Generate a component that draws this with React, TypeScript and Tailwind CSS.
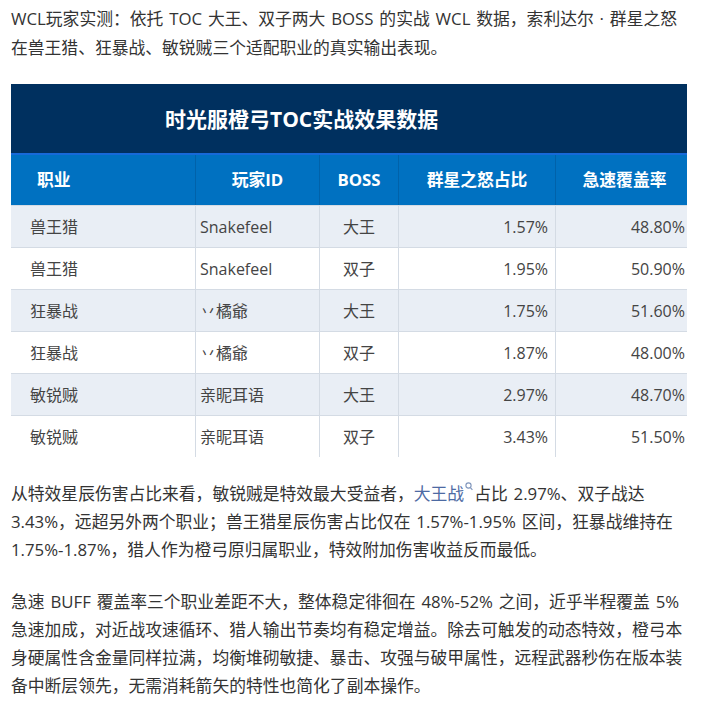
import React from "react";

const rows = [
  { job: "兽王猎", id: "Snakefeel", boss: "大王", star: "1.57%", haste: "48.80%" },
  { job: "兽王猎", id: "Snakefeel", boss: "双子", star: "1.95%", haste: "50.90%" },
  { job: "狂暴战", id: "丷橘爺", boss: "大王", star: "1.75%", haste: "51.60%" },
  { job: "狂暴战", id: "丷橘爺", boss: "双子", star: "1.87%", haste: "48.00%" },
  { job: "敏锐贼", id: "亲昵耳语", boss: "大王", star: "2.97%", haste: "48.70%" },
  { job: "敏锐贼", id: "亲昵耳语", boss: "双子", star: "3.43%", haste: "51.50%" },
];

const SearchMark: React.FC = () => (
  <svg width="8" height="9" viewBox="0 0 8 9" className="inline-block align-top mt-[2px] mx-[1px]">
    <circle cx="3.5" cy="3.5" r="2.6" fill="none" stroke="#7f95bb" strokeWidth="1.1" />
    <line x1="5.4" y1="5.6" x2="7.4" y2="7.8" stroke="#7f95bb" strokeWidth="1.2" />
  </svg>
);

const StatsTable: React.FC = () => {
  return (
    <div className="w-[676px] font-['Open_Sans','Noto_Sans_CJK_SC',sans-serif]">
      {/* title band */}
      <div className="h-[69px] bg-[#00305f] flex items-center pl-[154px]">
        <span className="text-white text-[21px] font-bold">时光服橙弓TOC实战效果数据</span>
      </div>
      <div className="h-[2px] bg-[#1769d8]" />
      {/* header */}
      <div className="grid grid-cols-[185px_124px_79px_157px_131px] h-[50px] bg-[#0071c1] text-white text-[16.8px] font-bold">
        <div className="flex items-center pl-[26px] border-r border-[#0062aa]">职业</div>
        <div className="flex items-center justify-center border-r border-[#0062aa]">玩家ID</div>
        <div className="flex items-center justify-center border-r border-[#0062aa]">BOSS</div>
        <div className="flex items-center justify-center border-r border-[#0062aa]">群星之怒占比</div>
        <div className="flex items-center justify-center pl-[6px]">急速覆盖率</div>
      </div>
      {/* body */}
      {rows.map((r, i) => (
        <div
          key={i}
          className={
            "grid grid-cols-[185px_124px_79px_157px_131px] h-[42px] border-t border-[#d4dbe4] text-[16px] text-[#444]" +
            (i % 2 === 0 ? " bg-[#e9eef5]" : " bg-white")
          }
        >
          <div className="flex items-center pl-[19px] border-r border-[#d4dbe4]">{r.job}</div>
          <div className="flex items-center pl-[4px] border-r border-[#d4dbe4]">{r.id}</div>
          <div className="flex items-center justify-center border-r border-[#d4dbe4]">{r.boss}</div>
          <div className="flex items-center justify-end pr-[7px] border-r border-[#d4dbe4]">{r.star}</div>
          <div className="flex items-center justify-end pr-[2px]">{r.haste}</div>
        </div>
      ))}
    </div>
  );
};

export default function App() {
  return (
    <div className="w-[705px] h-[718px] bg-white pl-[11px] pt-[4px] text-[16.8px] leading-[28px] text-[#333] font-['Open_Sans','Noto_Sans_CJK_SC',sans-serif] overflow-hidden">
      <p className="whitespace-nowrap leading-[29px] [word-spacing:1.5px]">
        WCL玩家实测：依托 TOC 大王、双子两大 BOSS 的实战 WCL 数据，索利达尔 · 群星之怒
        <br />
        在兽王猎、狂暴战、敏锐贼三个适配职业的真实输出表现。
      </p>

      <div className="mt-[22px]">
        <StatsTable />
      </div>

      <p className="mt-[23px] whitespace-nowrap [word-spacing:1.5px]">
        从特效星辰伤害占比来看，敏锐贼是特效最大受益者，
        <span className="text-[#4d6aa3]">大王战</span>
        <SearchMark />
        占比 2.97%、双子战达
        <br />
        3.43%，远超另外两个职业；兽王猎星辰伤害占比仅在 1.57%-1.95% 区间，狂暴战维持在
        <br />
        1.75%-1.87%，猎人作为橙弓原归属职业，特效附加伤害收益反而最低。
      </p>

      <p className="mt-[24px] whitespace-nowrap [word-spacing:1.5px]">
        急速 BUFF 覆盖率三个职业差距不大，整体稳定徘徊在 48%-52% 之间，近乎半程覆盖 5%
        <br />
        急速加成，对近战攻速循环、猎人输出节奏均有稳定增益。除去可触发的动态特效，橙弓本
        <br />
        身硬属性含金量同样拉满，均衡堆砌敏捷、暴击、攻强与破甲属性，远程武器秒伤在版本装
        <br />
        备中断层领先，无需消耗箭矢的特性也简化了副本操作。
      </p>
    </div>
  );
}
